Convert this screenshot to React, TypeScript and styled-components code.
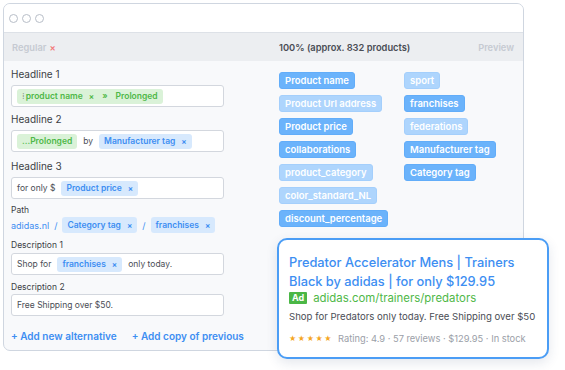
import React from "react";
import styled, { createGlobalStyle } from "styled-components";

const Global = createGlobalStyle`
  html, body { margin: 0; padding: 0; background: #ffffff; }
  body { font-family: "Inter", "DejaVu Sans", sans-serif; }
  * { box-sizing: border-box; }
`;

const Page = styled.div`
  position: relative;
  width: 565px;
  height: 370px;
  padding: 3px 0 0 3px;
`;

const Window = styled.div`
  width: 521px;
  height: 348px;
  border: 1px solid #cfd6e0;
  border-radius: 7px;
  background: #f8f9fb;
  overflow: hidden;
  display: flex;
  flex-direction: column;
`;

const TitleBar = styled.div`
  height: 29px;
  flex: none;
  background: #ffffff;
  border-bottom: 1px solid #dde1e7;
  display: flex;
  align-items: center;
  gap: 4px;
  padding-left: 5px;
`;

const Dot = styled.span`
  width: 9px;
  height: 9px;
  border-radius: 50%;
  border: 1px solid #b8bec8;
`;

const HeaderBar = styled.div`
  height: 28px;
  flex: none;
  background: #eceef1;
  display: grid;
  grid-template-columns: 267px 1fr auto;
  align-items: center;
  padding: 0 9px 0 8px;
  font-size: 9.3px;
  font-weight: 600;
`;

const Muted = styled.span`
  color: #c6cad2;
`;

const RedX = styled.span`
  color: #f27b7b;
  margin-left: 3px;
`;

const Count = styled.span`
  color: #4a4d55;
`;

const Body = styled.div`
  flex: 1;
  display: grid;
  grid-template-columns: 275px 1fr;
`;

const Editor = styled.div`
  padding: 6px 0 0 7px;
  display: flex;
  flex-direction: column;
`;

const Label = styled.div<{ $small?: boolean; $gap?: number; $after?: number }>`
  font-size: ${(p) => (p.$small ? "8.5px" : "10px")};
  line-height: ${(p) => (p.$small ? "11px" : "14px")};
  color: #3c3f45;
  margin-top: ${(p) => p.$gap ?? 0}px;
  margin-bottom: ${(p) => p.$after ?? 4}px;
`;

const Field = styled.div`
  width: 213px;
  height: 22px;
  flex: none;
  background: #ffffff;
  border: 1px solid #d3d7de;
  border-radius: 3px;
  display: flex;
  align-items: center;
  gap: 6px;
  padding: 0 5px;
  font-size: 8.5px;
  color: #4a4d55;
  white-space: nowrap;
`;

const Chip = styled.span<{ $tone: "green" | "blue"; $tall?: boolean }>`
  height: ${(p) => (p.$tall ? 16 : 15)}px;
  display: inline-flex;
  align-items: center;
  gap: 6px;
  padding: 0 5px;
  border-radius: 3px;
  font-size: 8.5px;
  font-weight: 600;
  background: ${(p) => (p.$tone === "green" ? "#daf2d8" : "#d7e9fd")};
  color: ${(p) => (p.$tone === "green" ? "#4fb848" : "#3d8ef2")};
`;

const Handle = styled.span`
  color: #8a9a88;
  margin-right: -5px;
  font-weight: 400;
`;

const Sep = styled.span`
  margin: 0 2px;
`;

const X = styled.span`
  font-size: 8px;
`;

const PathRow = styled.div`
  display: flex;
  align-items: center;
  gap: 5px;
  height: 16px;
  font-size: 9px;
  color: #3d8ef2;
`;

const Links = styled.div`
  display: flex;
  gap: 15px;
  margin-top: 13px;
  line-height: 14px;
  font-size: 10px;
  font-weight: 600;
  color: #3d8ef2;
`;

const Tags = styled.div`
  display: flex;
  padding-top: 11px;
`;

const TagCol = styled.div`
  width: 125px;
  display: flex;
  flex-direction: column;
  align-items: flex-start;
  gap: 6px;
`;

const Tag = styled.span<{ $light?: boolean }>`
  height: 17px;
  display: inline-flex;
  align-items: center;
  padding: 0 5px;
  border-radius: 3px;
  font-size: 9.5px;
  font-weight: 600;
  color: #ffffff;
  background: ${(p) => (p.$light ? "#aed5fd" : "#6bb3fb")};
  border: 1px solid ${(p) => (p.$light ? "#a4cffc" : "#62adf9")};
`;

const Card = styled.div`
  position: absolute;
  left: 277px;
  top: 238px;
  width: 272px;
  height: 121px;
  background: #ffffff;
  border: 2px solid #4b9df5;
  border-radius: 10px;
  box-shadow: 0 4px 12px rgba(30, 60, 110, 0.12);
  padding: 13px 8px 0 10px;
  display: flex;
  flex-direction: column;
`;

const AdTitle = styled.div`
  font-size: 12.8px;
  line-height: 19px;
  color: #3d8ef2;
  font-weight: 500;
  white-space: nowrap;
`;

const UrlRow = styled.div`
  display: flex;
  align-items: center;
  gap: 6px;
  margin-top: -1px;
  height: 16px;
`;

const AdBadge = styled.span`
  background: #4bb746;
  color: #ffffff;
  font-size: 9px;
  font-weight: 700;
  padding: 0 3px;
  height: 12px;
  line-height: 12px;
  border-radius: 1px;
`;

const Url = styled.span`
  color: #4fb848;
  font-size: 11.4px;
`;

const Desc = styled.div`
  font-size: 9.6px;
  line-height: 13px;
  color: #4a4d55;
  margin-top: 4px;
  white-space: nowrap;
`;

const Rating = styled.div`
  display: flex;
  align-items: center;
  gap: 5px;
  margin-top: 9px;
  font-size: 9.3px;
  line-height: 13px;
  color: #9ba0a8;
  white-space: nowrap;
`;

const Stars = styled.span`
  color: #f5a623;
  font-size: 7px;
  letter-spacing: 1.5px;
`;

const leftTags: [string, boolean][] = [
  ["Product name", false],
  ["Product Url address", true],
  ["Product price", false],
  ["collaborations", false],
  ["product_category", true],
  ["color_standard_NL", true],
  ["discount_percentage", false],
];

const rightTags: [string, boolean][] = [
  ["sport", true],
  ["franchises", false],
  ["federations", true],
  ["Manufacturer tag", false],
  ["Category tag", false],
];

export default function App() {
  return (
    <>
      <Global />
      <Page>
        <Window>
          <TitleBar>
            <Dot />
            <Dot />
            <Dot />
          </TitleBar>
          <HeaderBar>
            <span>
              <Muted>Regular</Muted>
              <RedX>×</RedX>
            </span>
            <Count>100% (approx. 832 products)</Count>
            <Muted>Preview</Muted>
          </HeaderBar>
          <Body>
            <Editor>
              <Label>Headline 1</Label>
              <Field>
                <Chip $tone="green">
                  <Handle>⁞</Handle>product name <X>×</X> <Sep>»</Sep> Prolonged
                </Chip>
              </Field>
              <Label $gap={5}>Headline 2</Label>
              <Field>
                <Chip $tone="green">...Prolonged</Chip>
                <span>by</span>
                <Chip $tone="blue">
                  Manufacturer tag <X>×</X>
                </Chip>
              </Field>
              <Label $gap={7}>Headline 3</Label>
              <Field>
                <span>for only $</span>
                <Chip $tone="blue">
                  Product price <X>×</X>
                </Chip>
              </Field>
              <Label $small $gap={6} $after={1}>
                Path
              </Label>
              <PathRow>
                <span>adidas.nl</span>
                <span>/</span>
                <Chip $tone="blue" $tall>
                  Category tag <X>×</X>
                </Chip>
                <span>/</span>
                <Chip $tone="blue" $tall>
                  franchises <X>×</X>
                </Chip>
              </PathRow>
              <Label $small $gap={7} $after={2}>
                Description 1
              </Label>
              <Field>
                <span>Shop for</span>
                <Chip $tone="blue">
                  franchises <X>×</X>
                </Chip>
                <span>only today.</span>
              </Field>
              <Label $small $gap={7} $after={1}>
                Description 2
              </Label>
              <Field>
                <span>Free Shipping over $50.</span>
              </Field>
              <Links>
                <span>+ Add new alternative</span>
                <span>+ Add copy of previous</span>
              </Links>
            </Editor>
            <Tags>
              <TagCol>
                {leftTags.map(([t, l]) => (
                  <Tag key={t} $light={l}>
                    {t}
                  </Tag>
                ))}
              </TagCol>
              <TagCol>
                {rightTags.map(([t, l]) => (
                  <Tag key={t} $light={l}>
                    {t}
                  </Tag>
                ))}
              </TagCol>
            </Tags>
          </Body>
        </Window>
        <Card>
          <AdTitle>
            Predator Accelerator Mens | Trainers
            <br />
            Black by adidas | for only $129.95
          </AdTitle>
          <UrlRow>
            <AdBadge>Ad</AdBadge>
            <Url>adidas.com/trainers/predators</Url>
          </UrlRow>
          <Desc>Shop for Predators only today. Free Shipping over $50</Desc>
          <Rating>
            <Stars>★★★★★</Stars>
            <span>Rating: 4.9 · 57 reviews · $129.95 · In stock</span>
          </Rating>
        </Card>
      </Page>
    </>
  );
}
